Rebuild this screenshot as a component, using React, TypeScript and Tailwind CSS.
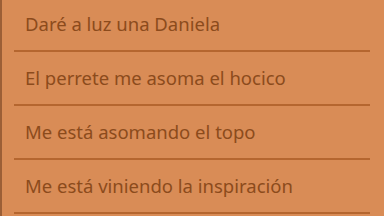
import React from "react";

const items = [
  "Daré a luz una Daniela",
  "El perrete me asoma el hocico",
  "Me está asomando el topo",
  "Me está viniendo la inspiración",
];

export default function App() {
  return (
    <div
      className="w-[384px] h-[216px] overflow-hidden bg-[#d98c56] border-l-2 border-[#9c5f36] flex"
      style={{ fontFamily: '"Noto Sans", "Open Sans", sans-serif' }}
    >
      <div className="flex flex-col flex-1 -mt-[2px]">
        {items.map((t) => (
          <div key={t} className="flex flex-col shrink-0">
            <div className="h-[52px] flex items-center pl-[23px] text-[18.5px] leading-[24px] text-[#8c4b1c]">
              {t}
            </div>
            <div className="h-[2px] ml-[12px] w-[356px] bg-[#b5662f]" />
          </div>
        ))}
      </div>
    </div>
  );
}
